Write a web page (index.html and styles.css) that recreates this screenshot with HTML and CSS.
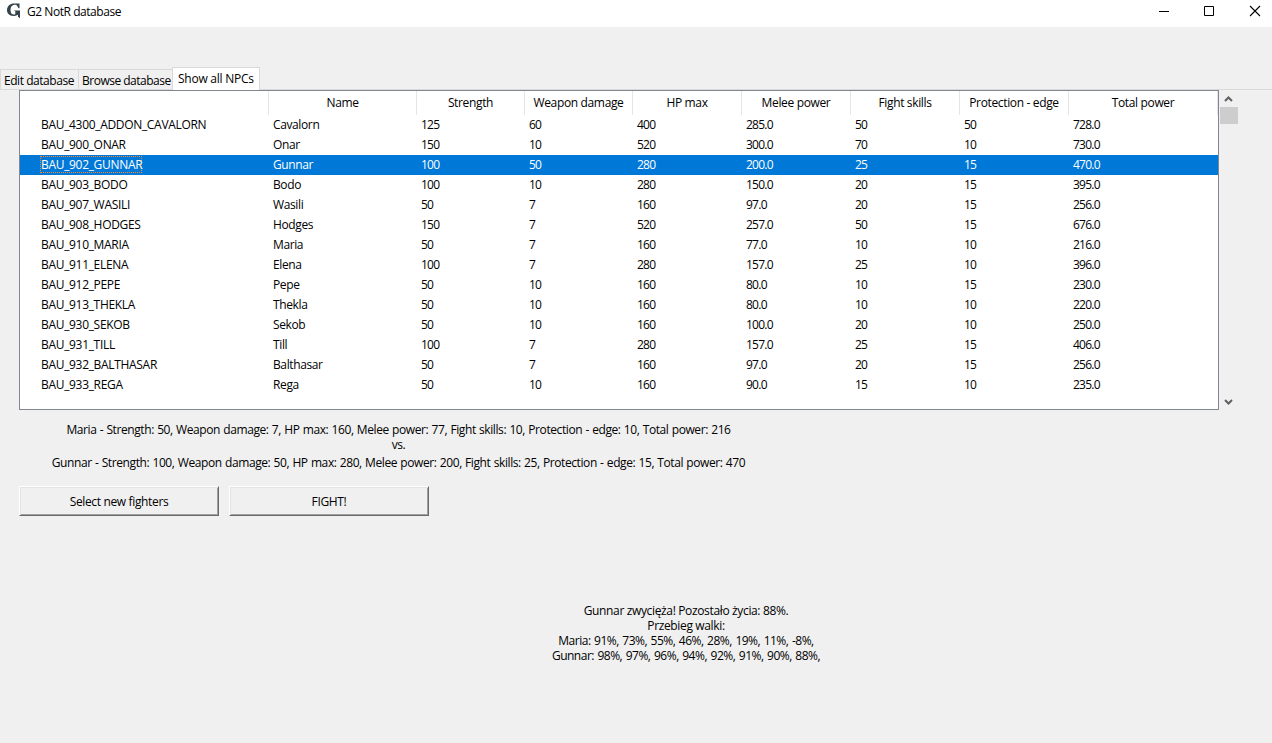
FILE: index.html
```html
<!DOCTYPE html>
<html lang="en">
<head>
<meta charset="utf-8">
<title>G2 NotR database</title>
<link rel="stylesheet" href="styles.css">
</head>
<body>
<header class="titlebar">
  <svg class="logo" width="16" height="16" viewBox="0 0 16 16"><path d="M8 .5h5.500v4.800h-1L10.800 2.300C6.800.8 4.500 3.300 4.500 7c0 3.800 2 5.200 4.800 4.300V8.200L7.600 7.500H14v7.800l-2-1.600v-2C6.500 14.600 1 12.200 1 7.300 1 3 4.200.5 8 .5z" fill="#34434a"/></svg>
  <span class="title">G2 NotR database</span>
  <div class="controls">
    <svg width="46" height="22" viewBox="0 0 46 22"><path d="M13 11.500h10" stroke="#000"/></svg>
    <svg width="46" height="22" viewBox="0 0 46 22"><path d="M12.500 6.500h9v9h-9z" fill="none" stroke="#000"/></svg>
    <svg width="46" height="22" viewBox="0 0 46 22"><path d="M12 6l10 10M22 6L12 16" stroke="#000" stroke-width="1.100"/></svg>
  </div>
</header>
<nav class="tabs">
  <div class="tab edit"><span>Edit database</span></div>
  <div class="tab browse"><span>Browse database</span></div>
  <div class="tab active"><span>Show all NPCs</span></div>
</nav>
<main>
  <div class="list">
    <div class="table">
      <div class="row head"><span></span><span>Name</span><span>Strength</span><span>Weapon damage</span><span>HP max</span><span>Melee power</span><span>Fight skills</span><span>Protection - edge</span><span>Total power</span></div>
      <div class="row"><span><b>BAU_4300_ADDON_CAVALORN</b></span><span>Cavalorn</span><span>125</span><span>60</span><span>400</span><span>285.0</span><span>50</span><span>50</span><span>728.0</span></div>
      <div class="row"><span><b>BAU_900_ONAR</b></span><span>Onar</span><span>150</span><span>10</span><span>520</span><span>300.0</span><span>70</span><span>10</span><span>730.0</span></div>
      <div class="row selected"><span><b>BAU_902_GUNNAR</b></span><span>Gunnar</span><span>100</span><span>50</span><span>280</span><span>200.0</span><span>25</span><span>15</span><span>470.0</span></div>
      <div class="row"><span><b>BAU_903_BODO</b></span><span>Bodo</span><span>100</span><span>10</span><span>280</span><span>150.0</span><span>20</span><span>15</span><span>395.0</span></div>
      <div class="row"><span><b>BAU_907_WASILI</b></span><span>Wasili</span><span>50</span><span>7</span><span>160</span><span>97.0</span><span>20</span><span>15</span><span>256.0</span></div>
      <div class="row"><span><b>BAU_908_HODGES</b></span><span>Hodges</span><span>150</span><span>7</span><span>520</span><span>257.0</span><span>50</span><span>15</span><span>676.0</span></div>
      <div class="row"><span><b>BAU_910_MARIA</b></span><span>Maria</span><span>50</span><span>7</span><span>160</span><span>77.0</span><span>10</span><span>10</span><span>216.0</span></div>
      <div class="row"><span><b>BAU_911_ELENA</b></span><span>Elena</span><span>100</span><span>7</span><span>280</span><span>157.0</span><span>25</span><span>10</span><span>396.0</span></div>
      <div class="row"><span><b>BAU_912_PEPE</b></span><span>Pepe</span><span>50</span><span>10</span><span>160</span><span>80.0</span><span>10</span><span>15</span><span>230.0</span></div>
      <div class="row"><span><b>BAU_913_THEKLA</b></span><span>Thekla</span><span>50</span><span>10</span><span>160</span><span>80.0</span><span>10</span><span>10</span><span>220.0</span></div>
      <div class="row"><span><b>BAU_930_SEKOB</b></span><span>Sekob</span><span>50</span><span>10</span><span>160</span><span>100.0</span><span>20</span><span>10</span><span>250.0</span></div>
      <div class="row"><span><b>BAU_931_TILL</b></span><span>Till</span><span>100</span><span>7</span><span>280</span><span>157.0</span><span>25</span><span>15</span><span>406.0</span></div>
      <div class="row"><span><b>BAU_932_BALTHASAR</b></span><span>Balthasar</span><span>50</span><span>7</span><span>160</span><span>97.0</span><span>20</span><span>15</span><span>256.0</span></div>
      <div class="row"><span><b>BAU_933_REGA</b></span><span>Rega</span><span>50</span><span>10</span><span>160</span><span>90.0</span><span>15</span><span>10</span><span>235.0</span></div>
    </div>
    <div class="scrollbar">
      <svg width="17" height="17" viewBox="0 0 17 17"><path d="M5 11l3.500-3.500L12 11" fill="none" stroke="#606060" stroke-width="2"/></svg>
      <div class="thumb"></div>
      <svg class="down" width="17" height="17" viewBox="0 0 17 17"><path d="M5 7l3.500 3.500L12 7" fill="none" stroke="#606060" stroke-width="2"/></svg>
    </div>
  </div>
  <section class="versus">
    <p class="first">Maria - Strength: 50, Weapon damage: 7, HP max: 160, Melee power: 77, Fight skills: 10, Protection - edge: 10, Total power: 216</p>
    <p class="vs">vs.</p>
    <p class="second">Gunnar - Strength: 100, Weapon damage: 50, HP max: 280, Melee power: 200, Fight skills: 25, Protection - edge: 15, Total power: 470</p>
  </section>
  <div class="actions">
    <button>Select new fighters</button>
    <button>FIGHT!</button>
  </div>
  <section class="result">
    <p>Gunnar zwycięża! Pozostało życia: 88%.</p>
    <p>Przebieg walki:</p>
    <p class="rounds">Maria: 91%, 73%, 55%, 46%, 28%, 19%, 11%, -8%,</p>
    <p class="rounds">Gunnar: 98%, 97%, 96%, 94%, 92%, 91%, 90%, 88%,</p>
  </section>
</main>
</body>
</html>
```
FILE: styles.css
```css
* { box-sizing: border-box; }
body {
  margin: 0;
  height: 743px;
  overflow: hidden;
  background: #f0f0f0;
  color: #000;
  font: 12px/15px "Open Sans", "Noto Sans", sans-serif;
  letter-spacing: -0.35px;
  white-space: nowrap;
}
p { margin: 0; }
b { font-weight: inherit; }
.titlebar {
  display: flex;
  height: 27px;
  background: #fff;
}
.logo { margin: 3px 5px 0 6px; }
.title { padding-top: 4px; letter-spacing: -0.45px; }
.controls { display: flex; margin-left: auto; margin-right: -12px; }
.controls svg { display: block; }
.tabs {
  display: flex;
  align-items: flex-end;
  height: 63px;
  border-bottom: 1px solid #d9d9d9;
}
.tab {
  height: 20px;
  padding: 3px 0 0 3px;
  border: 1px solid #d9d9d9;
  border-width: 1px 0 0 1px;
}
.edit { width: 78px; letter-spacing: -0.45px; }
.browse { width: 94px; letter-spacing: -0.5px; }
.active {
  width: 88px;
  height: 23px;
  margin-bottom: -1px;
  padding-left: 5px;
  border-right-width: 1px;
  background: #fff;
  letter-spacing: -0.25px;
}
.list { display: flex; height: 320px; padding-left: 19px; }
.table {
  width: 1200px;
  border: 1px solid #828790;
  background: #fff;
}
.row {
  display: grid;
  grid-template-columns: 249px 148px 108px 108px repeat(4, 109px) 149px;
  height: 20px;
  line-height: 20px;
  letter-spacing: -0.75px;
}
.row span { padding-left: 4px; }
.row span:first-child { padding-left: 21px; letter-spacing: -0.32px; }
.row span:nth-child(2) { letter-spacing: -0.38px; }
.head { height: 24px; line-height: 24px; letter-spacing: -0.35px; }
.head span {
  padding: 0;
  border-right: 1px solid #e5e5e5;
  text-align: center;
}
.selected { background: #0078d7; color: #fff; }
.selected b {
  display: inline-block;
  width: 102px;
  height: 17px;
  margin: 1px 0 0 -1px;
  padding: 0 1px;
  line-height: 18px;
  vertical-align: top;
  border: 1px dotted #ff8728;
  padding: 0;
  line-height: 16px;
}
.scrollbar {
  display: flex;
  flex-direction: column;
  width: 19px;
  padding-left: 1px;
}
.scrollbar svg { display: block; flex: none; }
.thumb { width: 18px; height: 17px; background: #cdcdcd; }
.down { margin-top: auto; }
.versus { width: 758px; padding: 12px 0 0 39px; text-align: center; letter-spacing: -0.4px; word-spacing: 0.5px; }
.second { margin-top: 3px; }
.actions { display: flex; gap: 10px; margin: 16px 0 0 19px; }
button {
  width: 200px;
  height: 30px;
  padding: 0;
  border: 1px solid;
  border-color: #fff #696969 #696969 #fff;
  box-shadow: inset 1px 1px #e3e3e3, inset -1px -1px #a0a0a0;
  background: #f0f0f0;
  color: #000;
  font: inherit;
  letter-spacing: inherit;
}
.result { width: 300px; margin: 87px 0 0 536px; text-align: center; }
.rounds { letter-spacing: -0.5px; word-spacing: 0.9px; }
```
